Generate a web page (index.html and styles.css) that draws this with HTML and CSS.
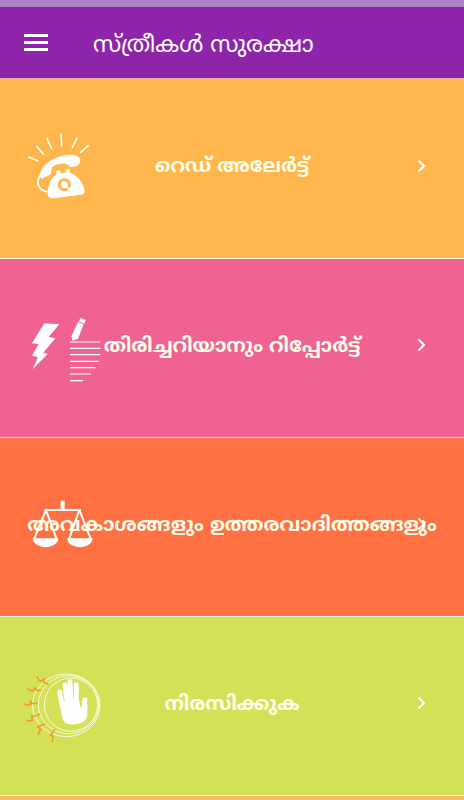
FILE: index.html
```
<!DOCTYPE html>
<html lang="ml">
<head>
<meta charset="UTF-8"/>
<meta name="viewport" content="width=device-width, initial-scale=1.0"/>
<title>സ്ത്രീകൾ സുരക്ഷാ</title>
<link rel="stylesheet" href="styles.css">
</head>
<body>

<div class="status-bar"></div>

<!-- APP BAR -->
<header class="app-bar">
  <button class="menu-btn" aria-label="Menu"><span></span><span></span><span></span></button>
  <h1 class="app-title">സ്ത്രീകൾ സുരക്ഷാ</h1>
</header>

<!-- MENU ROWS -->
<main class="menu">
  <a class="row red-alert">
    <!-- ringing phone -->
    <svg class="icon" viewBox="0 -3 330 300" fill="#fff">
      <path d="M56 111l27 11M81 80l19 22M111 56l14 30M153 43l2 34M201 54l-14 28M235 77l-23 20" stroke="#fff" stroke-width="5" stroke-linecap="round"/>
      <path d="M89 170C91 140 125 108 178 104c20-1 33 6 33 18-1 11-13 19-27 19-9 0-7-9-17-10-14-1-34 4-41 12-4 7 2 14-6 21-9 7-17 4-23 14z"/>
      <path d="M92 164C76 188 84 214 118 215" fill="none" stroke="#fff" stroke-width="5"/>
      <path d="M139 164v-10q6-6 12 0v6l16-2v-9q6-6 13 0v9c19 6 36 26 42 46 5 14 0 18-8 20l-82 11c-15 1-20-6-19-19 1-20 11-45 26-52z"/>
      <circle cx="163" cy="194" r="15" fill="none" stroke="#ffb74d" stroke-width="9"/>
      <path d="M168 199l15 12" stroke="#fff" stroke-width="5"/>
    </svg>
    <span class="label">റെഡ് അലേർട്ട്</span>
    <svg class="arrow" viewBox="0 0 10 16"><path d="M1.500 2.500L7 8l-5.500 5.500"/></svg>
  </a>
  <a class="row report">
    <!-- bolt, pencil and note lines -->
    <svg class="icon" viewBox="0 -6 330 300" fill="#fff">
      <path d="M103 70L66 130l20 2-20 35 18 5-16 36 45-46-13-4 36-43-20-4 32-38z"/>
      <path d="M204 66l17 7-17 43-16 6-4-13zM211 54l16 6-4 11-16-7z"/>
      <path d="M180 126h91M180 145h91M180 164h91M180 184h86M180 203h77M180 222h63M180 242h39" stroke="#fff" stroke-width="3.500"/>
    </svg>
    <span class="label">തിരിച്ചറിയാനും റിപ്പോർട്ട്</span>
    <svg class="arrow" viewBox="0 0 10 16"><path d="M1.500 2.500L7 8l-5.500 5.500"/></svg>
  </a>
  <a class="row rights">
    <!-- scales -->
    <svg class="icon" viewBox="0 -9 330 300" fill="#fff">
      <path d="M152 62h12v28h-12z"/>
      <path d="M103 90h110M108 90L72 178M108 90l32 88M208 90l-31 88M208 90l35 88" fill="none" stroke="#fff" stroke-width="6"/>
      <path d="M68 175h77c0 16-20 27-38 27s-39-11-39-27zM171 175h77c0 16-20 27-38 27s-39-11-39-27z"/>
    </svg>
    <span class="label">അവകാശങ്ങളും ഉത്തരവാദിത്തങ്ങളും</span>
    <svg class="arrow" viewBox="0 0 10 16"><path d="M1.500 2.500L7 8l-5.500 5.500"/></svg>
  </a>
  <a class="row reject">
    <!-- raised hand with sparks -->
    <svg class="icon" viewBox="0 3 330 300" fill="none" stroke-linecap="round">
      <g stroke="#fff" stroke-width="2.500">
        <circle cx="183" cy="149" r="80"/>
        <ellipse cx="176" cy="149" rx="91" ry="87"/>
        <ellipse cx="169" cy="151" rx="101" ry="94"/>
      </g>
      <path d="M149 111l11 56M165 90l8 65M180 79l4 72M199 89v68M225 134l-5 38" stroke="#fff" stroke-width="14.500"/>
      <path d="M151 142l56-8 5 24 20-10 0 33c-2 18-17 25-40 27-25 1-33-7-36-23z" fill="#fff"/>
      <path d="M81 66l10 13 12-7-2 9 14 7M53 102l14 6 9-9 5 8 11-1M42 148l18 2 2-11 3 7 17-1M52 198l15-2-2-13 7 1 16-6M85 238l7-15-9-7 7-4 15-4M127 259l3-15-10-3 5-5 9-12" stroke="#ee982c" stroke-width="4.500"/>
    </svg>
    <span class="label">നിരസിക്കുക</span>
    <svg class="arrow" viewBox="0 0 10 16"><path d="M1.500 2.500L7 8l-5.500 5.500"/></svg>
  </a>
  <a class="row next"></a>
</main>

</body>
</html>
```
FILE: styles.css
```
* {box-sizing:border-box;}
body {
  margin:0; height:800px; overflow:hidden; color:#fff;
  display:flex; flex-direction:column;
  font-family:"Noto Sans Malayalam", "Noto Sans", sans-serif;
}

/* HEADER */
.status-bar {height:7px; flex:none; background:#ad82c9;}
.app-bar {
  height:72px; flex:none; padding:0 24px; background:#8e24aa; border-bottom:1px solid #e5b3a5;
  display:flex; align-items:center; gap:45px;
}
.menu-btn {
  width:24px; padding:0 0 1px; border:none; background:none;
  display:flex; flex-direction:column; gap:4px;
}
.menu-btn span {height:3px; background:#fff;}
.app-title {margin:0; padding-top:7px; font-size:23px; font-weight:400; white-space:nowrap;}

/* ROWS: icon, label and arrow share one grid cell so long labels run over them */
.menu {flex:1; min-height:0; display:flex; flex-direction:column;}
.row {
  height:179px; flex:none; border-bottom:1px solid #fff3e0;
  display:grid; grid-template-columns:464px; align-items:center;
}
.row > * {grid-area:1 / 1;}
.red-alert {height:180px;}
.icon {width:110px; height:100px; margin-left:10px;}
.label {
  justify-self:center; margin-bottom:2px;
  font-size:19.6px; font-weight:700; white-space:nowrap; color:#fffde7;
}
.arrow {
  width:10px; height:16px; justify-self:end; margin:0 37px 6px 0;
  fill:none; stroke:#fff; stroke-width:2;
}
.red-alert {background:#ffb74d;}
.report {background:#f06292;}
.rights {background:#ff7043;}
.reject {background:#d4e157;}
.row.next {flex:1; height:auto; border:none; background:#f3bd62;}
```
